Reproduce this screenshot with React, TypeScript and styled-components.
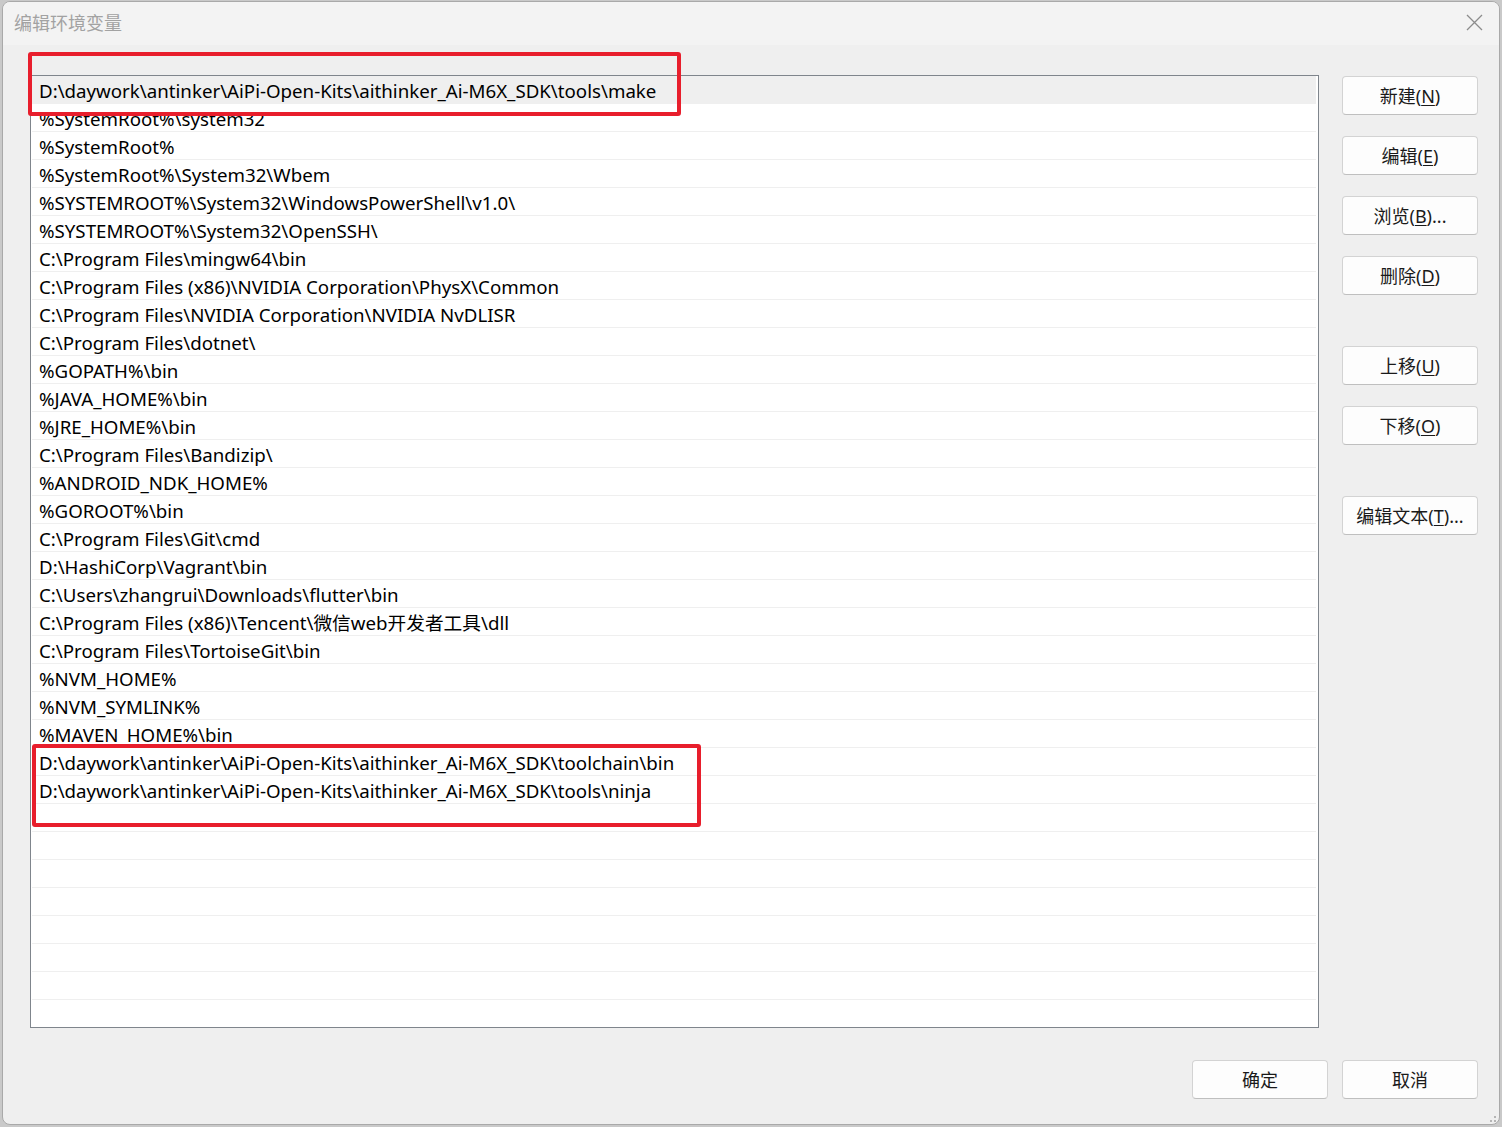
import React from 'react';
import styled, { createGlobalStyle } from 'styled-components';

const GlobalStyle = createGlobalStyle`
  html, body {
    margin: 0;
    padding: 0;
    background: #c9c9c9;
    overflow: hidden;
  }
  * {
    box-sizing: border-box;
  }
`;

const FONT = `"Noto Sans", "Noto Sans CJK SC", sans-serif`;

const Window = styled.div`
  position: relative;
  width: 1498px;
  height: 1124px;
  margin: 1px 0 0 2px;
  border: 1px solid #a9a9a9;
  border-radius: 8px;
  background: #efefef;
  display: flex;
  flex-direction: column;
  overflow: hidden;
  font-family: ${FONT};
  color: #000;
`;

const TitleBar = styled.div`
  height: 43px;
  flex: none;
  background: #f3f3f3;
  display: flex;
  align-items: center;
  justify-content: space-between;
  padding: 0 16px 3px 11px;
`;

const Title = styled.div`
  font-size: 18px;
  color: #a2a2a2;
`;

const CloseIcon = () => (
  <svg width="17" height="17" viewBox="0 0 17 17">
    <path d="M1 1 L16 16 M16 1 L1 16" stroke="#8c8c8c" strokeWidth="1.3" fill="none" />
  </svg>
);

const Body = styled.div`
  flex: 1;
  display: flex;
  flex-direction: column;
  padding: 30px 21px 0 27px;
`;

const Main = styled.div`
  display: flex;
  gap: 23px;
  align-items: flex-start;
`;

const ListBox = styled.div`
  width: 1289px;
  height: 953px;
  border: 1px solid #7f858c;
  background: #fff;
  padding: 0 2px 0 1px;
  overflow: hidden;
`;

const Row = styled.div<{ $selected?: boolean }>`
  height: 28px;
  border-bottom: 1px solid #efefef;
  background: ${(p) => (p.$selected ? '#efefef' : '#fff')};
  padding: 1px 0 0 7px;
  font-size: 18.7px;
  line-height: 27px;
  white-space: nowrap;
`;

const Side = styled.div`
  display: flex;
  flex-direction: column;
  gap: 21px;
  padding-top: 1px;
`;

const Button = styled.button<{ $space?: number }>`
  width: 136px;
  height: 39px;
  margin-top: ${(p) => p.$space ?? 0}px;
  border: 1px solid #d3d3d3;
  border-bottom-color: #bfbfbf;
  border-radius: 4px;
  background: #fdfdfd;
  font-family: ${FONT};
  font-size: 18px;
  line-height: 36px;
  color: #1a1a1a;
  padding: 0;
  cursor: default;

  u {
    text-underline-offset: 2px;
  }
`;

const Footer = styled.div`
  display: flex;
  justify-content: flex-end;
  gap: 14px;
  margin-top: 32px;
`;

const Mark = styled.div<{ $l: number; $t: number; $w: number; $h: number }>`
  position: absolute;
  left: ${(p) => p.$l}px;
  top: ${(p) => p.$t}px;
  width: ${(p) => p.$w}px;
  height: ${(p) => p.$h}px;
  border: 4px solid #e81e2c;
  border-radius: 3px;
  pointer-events: none;
`;

const Grip = styled.div`
  position: absolute;
  right: 2px;
  bottom: 2px;
  width: 12px;
  height: 12px;
`;

const GripIcon = () => (
  <svg width="12" height="12" viewBox="0 0 12 12">
    {[
      [8, 0], [4, 4], [8, 4], [0, 8], [4, 8], [8, 8],
    ].map(([x, y]) => (
      <rect key={`${x}-${y}`} x={x + 1} y={y + 1} width="2" height="2" fill="#b4b4b4" />
    ))}
  </svg>
);

const paths = [
  'D:\\daywork\\antinker\\AiPi-Open-Kits\\aithinker_Ai-M6X_SDK\\tools\\make',
  '%SystemRoot%\\system32',
  '%SystemRoot%',
  '%SystemRoot%\\System32\\Wbem',
  '%SYSTEMROOT%\\System32\\WindowsPowerShell\\v1.0\\',
  '%SYSTEMROOT%\\System32\\OpenSSH\\',
  'C:\\Program Files\\mingw64\\bin',
  'C:\\Program Files (x86)\\NVIDIA Corporation\\PhysX\\Common',
  'C:\\Program Files\\NVIDIA Corporation\\NVIDIA NvDLISR',
  'C:\\Program Files\\dotnet\\',
  '%GOPATH%\\bin',
  '%JAVA_HOME%\\bin',
  '%JRE_HOME%\\bin',
  'C:\\Program Files\\Bandizip\\',
  '%ANDROID_NDK_HOME%',
  '%GOROOT%\\bin',
  'C:\\Program Files\\Git\\cmd',
  'D:\\HashiCorp\\Vagrant\\bin',
  'C:\\Users\\zhangrui\\Downloads\\flutter\\bin',
  'C:\\Program Files (x86)\\Tencent\\微信web开发者工具\\dll',
  'C:\\Program Files\\TortoiseGit\\bin',
  '%NVM_HOME%',
  '%NVM_SYMLINK%',
  '%MAVEN_HOME%\\bin',
  'D:\\daywork\\antinker\\AiPi-Open-Kits\\aithinker_Ai-M6X_SDK\\toolchain\\bin',
  'D:\\daywork\\antinker\\AiPi-Open-Kits\\aithinker_Ai-M6X_SDK\\tools\\ninja',
];

const rows = [...paths, ...Array(8).fill('')];

export default function App() {
  return (
    <>
      <GlobalStyle />
      <Window>
        <TitleBar>
          <Title>编辑环境变量</Title>
          <CloseIcon />
        </TitleBar>
        <Body>
          <Main>
            <ListBox>
              {rows.map((text, i) => (
                <Row key={i} $selected={i === 0}>
                  {text}
                </Row>
              ))}
            </ListBox>
            <Side>
              <Button>新建(<u>N</u>)</Button>
              <Button>编辑(<u>E</u>)</Button>
              <Button>浏览(<u>B</u>)...</Button>
              <Button>删除(<u>D</u>)</Button>
              <Button $space={30}>上移(<u>U</u>)</Button>
              <Button>下移(<u>O</u>)</Button>
              <Button $space={30}>编辑文本(<u>T</u>)...</Button>
            </Side>
          </Main>
          <Footer>
            <Button>确定</Button>
            <Button>取消</Button>
          </Footer>
        </Body>
        <Mark $l={25} $t={50} $w={653} $h={64} />
        <Mark $l={29} $t={742} $w={669} $h={83} />
        <Grip>
          <GripIcon />
        </Grip>
      </Window>
    </>
  );
}
